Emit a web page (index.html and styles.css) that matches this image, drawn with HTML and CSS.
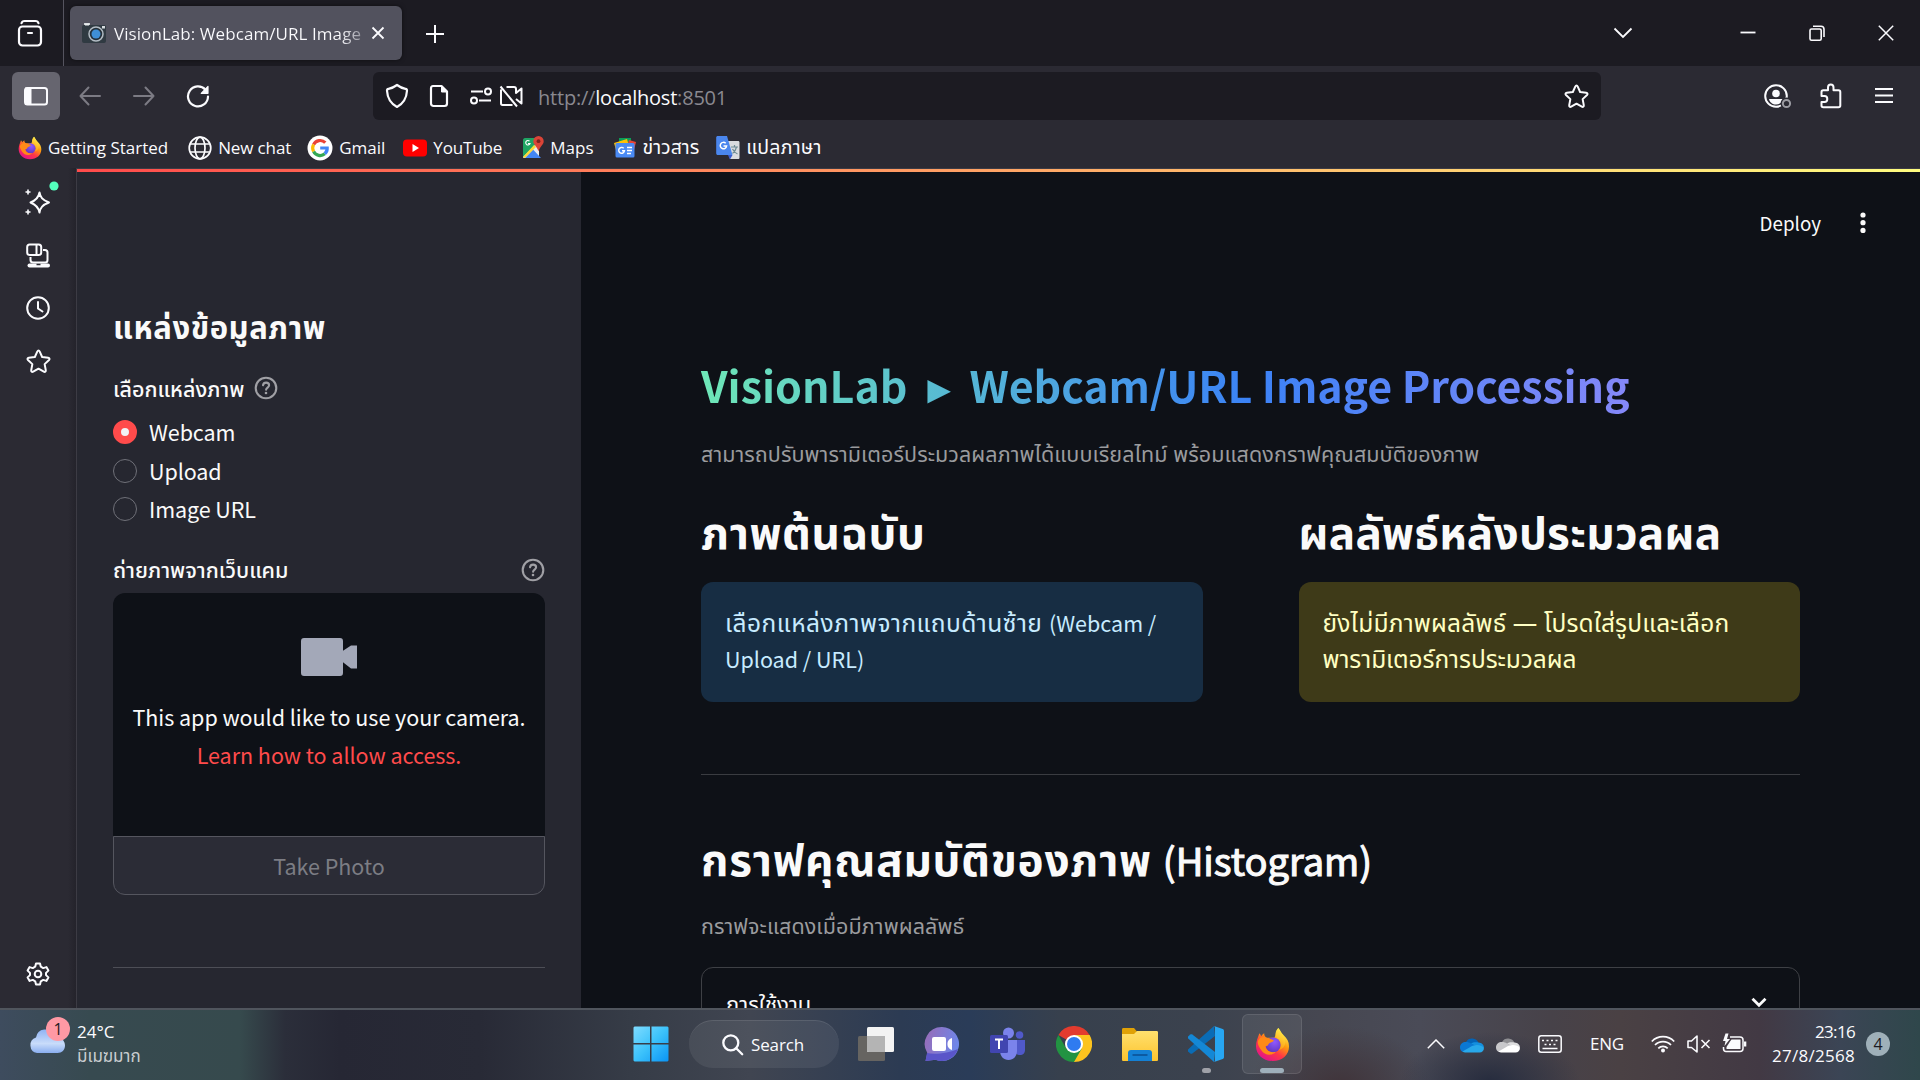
FILE: index.html
```html
<!DOCTYPE html>
<html lang="th">
<head>
<meta charset="utf-8">
<title>VisionLab: Webcam/URL Image Processing</title>
<link rel="stylesheet" href="styles.css">
</head>
<body>
<svg class="defs" aria-hidden="true">
  <defs>
    <linearGradient id="ff-body" x1="0.8" y1="0.1" x2="0.25" y2="0.95"><stop offset="0" stop-color="#fff44f"/><stop offset=".35" stop-color="#ff980e"/><stop offset=".65" stop-color="#ff3647"/><stop offset="1" stop-color="#e31587"/></linearGradient>
    <radialGradient id="ff-globe" cx=".6" cy=".3" r=".8"><stop offset="0" stop-color="#9059ff"/><stop offset="1" stop-color="#5b33b8"/></radialGradient>
    <linearGradient id="ff-tail" x1=".7" y1="0" x2=".4" y2="1"><stop offset="0" stop-color="#fff44f"/><stop offset="1" stop-color="#ff980e"/></linearGradient>
    <linearGradient id="win" x1="0" y1="0" x2="1" y2="1"><stop offset="0" stop-color="#7fdcff"/><stop offset=".5" stop-color="#3cc2fb"/><stop offset="1" stop-color="#0a94f5"/></linearGradient>
    <linearGradient id="cloud" x1="0" y1="0" x2="0" y2="1"><stop offset="0" stop-color="#8fb3f3"/><stop offset=".6" stop-color="#c9dcfa"/><stop offset="1" stop-color="#8aaef0"/></linearGradient>
    <linearGradient id="chat" x1="0" y1="0" x2="1" y2="0.3"><stop offset="0" stop-color="#9a6bb5"/><stop offset="1" stop-color="#6f86e8"/></linearGradient>
    <linearGradient id="folder" x1="0" y1="0" x2="0" y2="1"><stop offset="0" stop-color="#ffe06e"/><stop offset="1" stop-color="#fdc42e"/></linearGradient>
    <symbol id="firefox" viewBox="0 0 36 36">
      <path d="M24 1c2 2 2.500 4.500 5.500 7.500C33 12 35 15 35 20c0 8.500-7 15-17 15S1 28 1 19.500C1 15 3 11 4.500 6.500c1 1 1.500 2 1.800 3C7 8.500 8.500 7.200 9.500 6.500c-.2 2 .8 3.500 2.500 4.500L20 11c1.500-3 1-6 4-10z" fill="url(#ff-body)"/>
      <path d="M24 1c-3.500 3-3.500 7.500-1 10.500 4 3 5 8 1.500 12 5-1 8-6 6-11.500C29.500 8.500 25.500 5.500 24 1z" fill="url(#ff-tail)"/>
      <circle cx="18.500" cy="18.500" r="7.800" fill="url(#ff-globe)"/>
      <path d="M2.800 15c1.500-4.500 5.500-5.500 9.200-4 2 1 4.500.8 7.500 3-1 1.800-4 1.800-5.500 3.500-.3 1.700-2 2-3.200 2.500 1.200 4.500 5.700 7 10.700 5.500-4 4.500-11.500 4-15-1.500-2-3-3.900-6-3.700-9z" fill="#ff8a16"/>
    </symbol>
    <symbol id="help" viewBox="0 0 24 24">
      <circle cx="12" cy="12" r="10.300" fill="none" stroke="currentColor" stroke-width="2.100"/>
      <path d="M9 9.200c.3-1.600 1.500-2.600 3.100-2.600 1.700 0 3 1.100 3 2.700 0 2.200-3 2.300-3 4.500" fill="none" stroke="currentColor" stroke-width="2.100" stroke-linecap="round"/>
      <circle cx="12" cy="17" r="1.300" fill="currentColor"/>
    </symbol>
    <symbol id="star" viewBox="0 0 24 24">
      <path d="M12 1.500c.6 0 .9.400 1.200 1l2.300 5.200 5.800.7c1.300.2 1.700 1.300.8 2.200l-4.200 3.900 1.100 5.900c.2 1.300-.8 2-1.900 1.300L12 18.900l-5.100 2.800c-1.100.7-2.100 0-1.900-1.300l1.100-5.900-4.200-3.900c-.9-.9-.5-2 .8-2.200l5.800-.7 2.300-5.200c.3-.6.600-1 1.200-1z" fill="none" stroke="currentColor" stroke-width="1.900" stroke-linejoin="round"/>
    </symbol>
  </defs>
</svg>

<header class="tabbar">
  <div class="view-button">
    <svg width="26" height="30" viewBox="0 0 26 30" fill="none" stroke="currentColor" stroke-width="2.200" stroke-linecap="round"><path d="M4.500 4.200C5 2.500 6 2 7.500 2h11c1.500 0 2.500.5 3 2.200"/><rect x="2" y="7.500" width="22" height="19" rx="3.500"/><path d="M11 14h4"/></svg>
  </div>
  <div class="tab">
    <svg width="24" height="22" viewBox="0 0 24 22"><path d="M2 1h6v3H2z" fill="#cfd3d6"/><rect x="0" y="3" width="24" height="18" rx="2" fill="#303a42"/><rect x="3" y="1.500" width="4" height="2" fill="#e8ecee"/><rect x="20" y="4" width="3" height="2.500" fill="#d6dbde"/><circle cx="14" cy="12" r="7" fill="#25303a" stroke="#b3bcc4" stroke-width="1.500"/><circle cx="14" cy="12" r="4.500" fill="#3f8fd6"/></svg>
    <span class="tab-title">VisionLab: Webcam/URL Image</span>
    <svg width="14" height="14" viewBox="0 0 14 14" fill="none" stroke="currentColor" stroke-width="1.800"><path d="M1.500 1.500l11 11M12.500 1.500l-11 11"/></svg>
  </div>
  <svg class="new-tab" width="20" height="20" viewBox="0 0 20 20" fill="none" stroke="currentColor" stroke-width="2"><path d="M10 1v18M1 10h18"/></svg>
  <div class="window-controls">
    <svg width="20" height="12" viewBox="0 0 20 12" fill="none" stroke="currentColor" stroke-width="1.800"><path d="M1.500 1.500l8.500 8.500 8.500-8.500"/></svg>
    <svg width="16" height="16" viewBox="0 0 16 16" stroke="currentColor" stroke-width="1.800"><path d="M.5 7.500h15"/></svg>
    <svg width="16" height="16" viewBox="0 0 16 16" fill="none" stroke="currentColor" stroke-width="1.600"><rect x="1" y="4" width="11.200" height="11.200" rx="1.500"/><path d="M4 1.200h8c2 0 3 1 3 3V12"/></svg>
    <svg width="16" height="16" viewBox="0 0 16 16" stroke="currentColor" stroke-width="1.500"><path d="M.8.800l14.400 14.400M15.200.800L.8 15.200"/></svg>
  </div>
</header>

<nav class="navbar">
  <div class="sidebar-toggle"><svg width="24" height="20" viewBox="0 0 24 20" fill="none" stroke="currentColor" stroke-width="2"><rect x="1" y="2" width="22" height="16.500" rx="2.500"/><path d="M2 2.500h4.500v15.500H2z" fill="currentColor"/></svg></div>
  <svg class="dim back" width="22" height="20" viewBox="0 0 22 20" fill="none" stroke="currentColor" stroke-width="2" stroke-linecap="round" stroke-linejoin="round"><path d="M21 10H1.500M9.500 1.500L1.500 10l8 8.500"/></svg>
  <svg class="dim forward" width="22" height="20" viewBox="0 0 22 20" fill="none" stroke="currentColor" stroke-width="2" stroke-linecap="round" stroke-linejoin="round"><path d="M1 10h19.500M12.500 1.500l8 8.500-8 8.500"/></svg>
  <svg class="reload" width="24" height="24" viewBox="0 0 24 24" fill="none" stroke="currentColor" stroke-width="2.200" stroke-linecap="round"><path d="M19.500 5.800A10 10 0 1 0 22 12.500"/><path d="M22 2.500v6.800h-6.800z" fill="currentColor" stroke-width="1.200" stroke-linejoin="round"/></svg>
  <div class="urlbar">
    <svg width="24" height="26" viewBox="0 0 24 26" fill="none" stroke="currentColor" stroke-width="2.200" stroke-linejoin="round"><path d="M12 2c3 2.200 6 3.500 8.500 3.800 1.200.2 1.600.8 1.500 2-.4 7-3.500 12.700-10 16.200C5.500 20.500 2.400 14.800 2 7.800c-.1-1.200.3-1.800 1.500-2C6 5.500 9 4.200 12 2z"/></svg>
    <svg class="doc" width="20" height="24" viewBox="0 0 20 24" fill="none" stroke="currentColor" stroke-width="2.200" stroke-linejoin="round"><path d="M4 2h8.500L18 7.500V19.500c0 1.500-1 2.500-2.500 2.500h-11C3 22 2 21 2 19.500V4.500C2 3 2.800 2 4 2z"/><path d="M12.500 2v6H18z" fill="currentColor" stroke-width="1"/></svg>
    <svg class="perm" width="22" height="18" viewBox="0 0 22 18" fill="none" stroke="currentColor" stroke-width="2"><path d="M1 4.500h12M21 13.500H9"/><circle cx="18" cy="4.500" r="3"/><circle cx="4" cy="13.500" r="3"/></svg>
    <svg class="cam" width="24" height="24" viewBox="0 0 24 24" fill="none" stroke="currentColor" stroke-width="2" stroke-linejoin="round"><path d="M7.500 3H15c1.200 0 2 .8 2 2v4l5.500-4.500v15L17 15M13.500 21H3.500C2.500 21 2 20.300 2 19.300V5.500M1.500 2.500l16.500 20"/></svg>
    <span class="url"><span class="faint">http://</span>localhost<span class="faint">:8501</span></span>
    <svg class="bookmark-star" width="25" height="25"><use href="#star"/></svg>
  </div>
  <svg class="account" width="29" height="27" viewBox="0 0 29 27" fill="none" stroke="currentColor" stroke-width="2"><circle cx="13" cy="13" r="10.800"/><circle cx="13" cy="10.500" r="3.800" fill="currentColor" stroke="none"/><path d="M6 16h14c-.8 3.500-3.500 5.500-7 5.500S6.800 19.500 6 16z" fill="currentColor" stroke="none"/><circle cx="23.500" cy="20.500" r="6" fill="#2b2a33" stroke="none"/><circle cx="23.500" cy="20.500" r="3.600" stroke="#9b9ba2"/></svg>
  <svg class="extension" width="22" height="26" viewBox="0 0 22 26" fill="none" stroke="currentColor" stroke-width="2" stroke-linejoin="round"><path d="M1.500 13V9c0-1.200.6-1.800 1.800-1.800H8V4.500C8 2.500 9 1.500 10.800 1.500s2.700 1 2.700 3v2.700h5c1.200 0 1.800.6 1.800 1.800v13.500c0 1.200-.6 1.800-1.800 1.800H3.300c-1.200 0-1.800-.6-1.800-1.800V19h3c1.800 0 2.800-1.200 2.800-3s-1-3-2.800-3z"/></svg>
  <svg class="menu" width="20" height="18" viewBox="0 0 20 18" stroke="currentColor" stroke-width="2"><path d="M1 2h18M1 8.500h18M1 15h18"/></svg>
</nav>

<div class="bookmarks">
  <div class="bm b1"><svg width="24" height="26"><use href="#firefox"/></svg><span>Getting Started</span></div>
  <div class="bm b2"><svg width="24" height="24" viewBox="0 0 24 24" fill="none" stroke="currentColor" stroke-width="1.700"><circle cx="12" cy="12" r="10.800"/><ellipse cx="12" cy="12" rx="5" ry="10.800"/><path d="M2 8h20M2 16h20"/></svg><span>New chat</span></div>
  <div class="bm b3"><svg width="26" height="26" viewBox="0 0 26 26" fill="none" stroke-width="3.200"><circle cx="13" cy="13" r="12.500" fill="#fff"/><path d="M18.300 7.700A7.300 7.300 0 0 0 6.600 9.500" stroke="#ea4335"/><path d="M6.600 9.500a7.300 7.300 0 0 0 0 7" stroke="#fbbc05"/><path d="M6.600 16.500a7.300 7.300 0 0 0 11.200 2.300" stroke="#34a853"/><path d="M17.800 18.800A7.300 7.300 0 0 0 20.200 13H13.200" stroke="#4285f4"/></svg><span>Gmail</span></div>
  <div class="bm b4"><svg width="24" height="18" viewBox="0 0 24 18"><rect y=".5" width="24" height="17" rx="4" fill="#f00"/><path d="M9.500 5l6.500 4-6.500 4z" fill="#fff"/></svg><span>YouTube</span></div>
  <div class="bm b5"><svg width="22" height="24" viewBox="0 0 22 24"><path d="M1 4c0-1 .7-2 2-2h14v20H3c-1.300 0-2-1-2-2z" fill="#1fa463"/><path d="M1 21L17 5v17H3c-1.300 0-2-.4-2-1z" fill="#e8eaed"/><path d="M3 22l8-8.500 8 8.500z" fill="#4285f4"/><path d="M1 21L12 9l2 2L3 22z" fill="#fdd835"/><path d="M16.500 0a5.200 5.200 0 0 1 5.200 5.200c0 3.300-3.500 5-5.200 10-1.700-5-5.200-6.700-5.200-10A5.200 5.200 0 0 1 16.500 0z" fill="#db4437"/><circle cx="16.500" cy="5.200" r="1.900" fill="#7b231e"/><path d="M7.500 5.200A2.200 2.200 0 1 0 8 7.500H6" fill="none" stroke="#fff" stroke-width="1.100"/></svg><span>Maps</span></div>
  <div class="bm b6"><svg width="22" height="20" viewBox="0 0 22 20"><path d="M5 0h12v8H5z" fill="#0c9d58"/><path d="M0 5l13-4 2 7-13 4z" fill="#ffc107"/><path d="M22 4l-7-2-2 7 7 3z" fill="#ea4335"/><rect x="1.500" y="5" width="19" height="14.500" rx="1.500" fill="#4a8af4"/><path d="M13 9.500h5M13 12.500h5M13 15.500h4" stroke="#fff" stroke-width="1.300"/><path d="M9.700 10.300a2.900 2.900 0 1 0 .8 2.400H8" fill="none" stroke="#fff" stroke-width="1.400"/></svg><span class="th-ui">ข่าวสาร</span></div>
  <div class="bm b7"><svg width="24" height="26" viewBox="0 0 24 24"><path d="M9 5h13c1 0 1.500.5 1.500 1.500v15c0 1-.5 1.500-1.500 1.500h-8z" fill="#dadce0"/><path d="M2 0h9l5.500 19H2C.8 19 .2 18.400.2 17.200V1.800C.2.600.8 0 2 0z" fill="#4a86ee"/><path d="M12 19h4.500L14 23.500z" fill="#3a5bd0"/><path d="M15 11h7M18.500 9v2M20.500 11c-.8 3.500-2.500 5.500-4 6.500M16.500 13c1 2 3 4 5 5" fill="none" stroke="#6f8c96" stroke-width="1.200"/><path d="M9.700 7.300a3.200 3.200 0 1 0 .9 2.700H7.500" fill="none" stroke="#fff" stroke-width="1.500"/></svg><span class="th-ui">แปลภาษา</span></div>
</div>

<div class="browser-body">
  <aside class="rail">
    <svg class="r1" width="36" height="36" viewBox="0 0 36 36" fill="none" stroke="currentColor" stroke-width="2" stroke-linejoin="round"><path d="M15.500 11.500c.8 5 3 7.500 9.500 10-6.500 2.500-8.700 5-9.500 10-.8-5-3-7.500-9-10 6-2.500 8.200-5 9-10z"/><path d="M4 8.500v5M1.500 11h5M4 28.500v5M1.500 31h5" stroke-width="1.600"/><circle cx="30" cy="5" r="4.600" fill="#54ffbd" stroke="none"/></svg>
    <svg class="r2" width="24" height="25" viewBox="0 0 24 25" fill="none" stroke="currentColor" stroke-width="2"><rect x="1.200" y="1.500" width="14" height="10.500" rx="2.500"/><path d="M10.500 2v10M17 7h2c1.500 0 2.500.8 2.500 2.500V17c0 1.500-.8 2.500-2.500 2.500H7.500C6 19.500 4.500 18.500 4.500 17v-3"/><path d="M3.500 22.500h18.500" stroke-width="4" stroke-linecap="round"/><path d="M10.500 21.500h4" stroke="#2b2a33" stroke-width="1.500"/></svg>
    <svg class="r3" width="24" height="24" viewBox="0 0 24 24" fill="none" stroke="currentColor" stroke-width="2" stroke-linecap="round"><circle cx="12" cy="12" r="10.800"/><path d="M12 6v6.500l4.500 3"/></svg>
    <svg class="r4" width="25" height="25"><use href="#star"/></svg>
    <svg class="r5" width="24" height="24" viewBox="0 0 24 24" fill="none" stroke="currentColor" stroke-width="2" stroke-linejoin="round"><path d="M10 1.500h4l.8 3.200 2.400 1.400 3.200-1 2 3.500-2.400 2.300v2.200l2.400 2.300-2 3.500-3.200-1-2.400 1.400-.8 3.200h-4l-.8-3.200-2.400-1.400-3.200 1-2-3.500L4 13.100v-2.200L1.600 8.600l2-3.500 3.200 1 2.400-1.400z"/><circle cx="12" cy="12" r="3.300"/></svg>
  </aside>

  <div class="page">
    <div class="decoration"></div>
    <section class="side">
      <h2 class="side-title">แหล่งข้อมูลภาพ</h2>
      <div class="label source-label"><span>เลือกแหล่งภาพ</span><svg width="24" height="24"><use href="#help"/></svg></div>
      <div class="radio"><i class="dot on"></i><span>Webcam</span></div>
      <div class="radio"><i class="dot"></i><span>Upload</span></div>
      <div class="radio"><i class="dot"></i><span>Image URL</span></div>
      <div class="label cam-label"><span>ถ่ายภาพจากเว็บแคม</span><svg width="24" height="24"><use href="#help"/></svg></div>
      <div class="camera">
        <svg width="56" height="38" viewBox="0 0 56 36" preserveAspectRatio="none" fill="#a3a8b8"><path d="M3 0h36c2 0 3 1 3 3v9l8-5h6v22h-6l-8-6v10c0 2-1 3-3 3H3c-2 0-3-1-3-3V3c0-2 1-3 3-3z"/></svg>
        <p>This app would like to use your camera.</p>
        <p class="learn">Learn how to allow access.</p>
      </div>
      <div class="take-photo">Take Photo</div>
      <hr class="side-rule">
    </section>
    <main class="main">
      <div class="toolbar"><span>Deploy</span><svg width="6" height="22" viewBox="0 0 6 22" fill="currentColor"><circle cx="3" cy="3" r="2.600"/><circle cx="3" cy="10.700" r="2.600"/><circle cx="3" cy="18.400" r="2.600"/></svg></div>
      <h1 class="title"><span>VisionLab</span><span class="arrow">▸</span><span class="title-rest">Webcam/URL Image Processing</span></h1>
      <p class="caption c1">สามารถปรับพารามิเตอร์ประมวลผลภาพได้แบบเรียลไทม์ พร้อมแสดงกราฟคุณสมบัติของภาพ</p>
      <div class="columns">
        <div class="col">
          <h2 class="col-original">ภาพต้นฉบับ</h2>
          <div class="alert info"><span class="info-text">เลือกแหล่งภาพจากแถบด้านซ้าย</span> <span class="latin">(Webcam /</span><br><span class="latin">Upload / URL)</span></div>
        </div>
        <div class="col">
          <h2 class="col-result">ผลลัพธ์หลังประมวลผล</h2>
          <div class="alert warn">ยังไม่มีภาพผลลัพธ์ — โปรดใส่รูปและเลือก<br><span class="warn-rest">พารามิเตอร์การประมวลผล</span></div>
        </div>
      </div>
      <hr class="rule">
      <h2 class="hist"><span>กราฟคุณสมบัติของภาพ</span><span class="latin">(Histogram)</span></h2>
      <p class="caption c2">กราฟจะแสดงเมื่อมีภาพผลลัพธ์</p>
      <div class="expander"><span>การใช้งาน</span><svg width="16" height="11" viewBox="0 0 16 11" fill="none" stroke="currentColor" stroke-width="2.800"><path d="M1.500 1.800L8 8.300l6.500-6.500"/></svg></div>
    </main>
  </div>
</div>

<footer class="taskbar">
  <div class="weather">
    <div class="weather-icon">
      <svg width="42" height="40" viewBox="0 0 42 40"><path d="M9 36a8 8 0 0 1-1-15.500A9.500 9.500 0 0 1 26 18a9 9 0 0 1 4 3c4 0 7 3 7 7.500S34 36 29.500 36z" fill="url(#cloud)"/></svg>
      <span class="weather-count">1</span>
    </div>
    <div class="weather-text">24°C<br><span class="th-ui soft">มีเมฆมาก</span></div>
  </div>
  <div class="apps">
    <div class="app"><svg width="36" height="36" viewBox="0 0 36 36" fill="url(#win)"><path d="M1.500.500H17v16.500H.5V1.500zM18.500.500H34.500l1 1V17h-17zM.5 18.500H17V35.500H1.500l-1-1zM18.500 18.500h17v16l-1 1h-16z"/></svg></div>
    <div class="search"><svg width="22" height="22" viewBox="0 0 22 22" fill="none" stroke="currentColor" stroke-width="2.300" stroke-linecap="round"><circle cx="8.800" cy="8.800" r="7.500"/><path d="M14.200 14.200l6 6"/></svg><span>Search</span></div>
    <div class="app"><svg width="36" height="36" viewBox="0 0 36 36"><rect x="0" y="10" width="27" height="25" rx="1.500" fill="#666461"/><rect x="9" y="1" width="27" height="25" rx="1.500" fill="#f3f3f3"/><path d="M9 10h18v16H10.500L9 24.500z" fill="#b4b4b4"/></svg></div>
    <div class="app"><svg width="36" height="36" viewBox="0 0 36 36"><path d="M18 1a17 17 0 1 1-6.500 32.700L1.500 35l1.800-8A17 17 0 0 1 18 1z" fill="url(#chat)"/><path d="M3 27c8 2 22 0 31-4a17 17 0 0 1-22.500 10.700L1.500 35z" fill="#5a55c9"/><rect x="8" y="11" width="14" height="14" rx="2" fill="#fff"/><path d="M23.500 17c0-2 2-4.500 4.500-5v12c-2.500-.5-4.500-3-4.500-5z" fill="#fff"/></svg></div>
    <div class="app"><svg width="36" height="36" viewBox="0 0 36 36"><circle cx="18.500" cy="7" r="5.500" fill="#7b83eb"/><circle cx="29.500" cy="9" r="3.800" fill="#5059c9"/><path d="M24 14h11v10c0 3-2 5-5 5s-6-2-6-5z" fill="#5059c9"/><path d="M10 14h17v11c0 5-3.500 9-8.500 9S10 30 10 25z" fill="#7b83eb"/><rect x="0" y="9" width="18" height="18" rx="1.500" fill="#4145b0"/><path d="M5 13.500h8M9 13.500v9.500" stroke="#fff" stroke-width="2"/></svg></div>
    <div class="app"><svg width="36" height="36" viewBox="0 0 36 36"><path d="M18 18L2.400 9a18 18 0 0 1 31.200 0z" fill="#e33b2e"/><path d="M18 18V9h15.600A18 18 0 0 1 18 36z" fill="#fcc31e"/><path d="M2.400 9l7.800 13.500L18 27l7.800-4.500L18 36A18 18 0 0 1 2.400 9z" fill="#229342"/><circle cx="18" cy="18" r="9" fill="#fff"/><circle cx="18" cy="18" r="7" fill="#2f7bf0"/></svg></div>
    <div class="app"><svg width="36" height="36" viewBox="0 0 36 36"><path d="M0 3.500C0 2.500.5 2 1.500 2H12l3 3.500-2 3H0z" fill="#e0a106"/><path d="M0 8h12l3-3h19.500c1 0 1.500.5 1.500 1.500V33.500c0 1-.5 1.500-1.500 1.500h-33C.5 35 0 34.500 0 33.500z" fill="url(#folder)"/><path d="M6 35V27c0-1.800 1-3 3-3h18c2 0 3 1.200 3 3v8z" fill="#1480d4"/><path d="M10.500 29h15" stroke="#0b5196" stroke-width="1.600"/></svg></div>
    <div class="app under-dot"><svg width="36" height="36" viewBox="0 0 36 36"><path d="M26 0L7 17 0 23.500c-.5 1-.3 1.800.3 2.300l2 1.600c.7.500 1.300.4 2 0L27 10z" fill="#0a6cb5"/><path d="M.3 10.200l2-1.600c.7-.5 1.300-.4 2 0L27 26l-1 10L.2 12.500c-.5-.7-.5-1.600.1-2.300z" fill="#1488d6"/><path d="M26 0l8.700 3c.8.400 1.300 1 1.300 2v26c0 1-.5 1.600-1.300 2L26 36c1-.7 1-1.500 1-2.500v-31C27 1.500 27 .7 26 0z" fill="#27a6f2"/></svg></div>
    <div class="app active"><svg width="35" height="35"><use href="#firefox"/></svg></div>
  </div>
  <div class="tray">
    <svg width="18" height="10" viewBox="0 0 18 10" fill="none" stroke="currentColor" stroke-width="1.500"><path d="M.8 9.200L9 1l8.200 8.200"/></svg>
    <svg class="od" width="24" height="17" viewBox="0 0 24 17"><path d="M6 6a7 7 0 0 1 12.500 1L13 12z" fill="#0364b8"/><path d="M0 11.500C0 8 2.500 6 6 6c2 0 3.500.5 5 1.500l5 3L3 16c-2-.8-3-2.500-3-4.500z" fill="#0a78d4"/><path d="M11 7.500c2-1.200 4-1.500 7.500-1 3.500.2 5.500 2.500 5.500 5.200l-6-.7z" fill="#1490df"/><path d="M2.500 15.500L12 10c5-2 9-1 12 1.700 0 3-2 4.800-4.500 4.800H6c-1.500 0-2.500-.3-3.500-1z" fill="#28a8ea"/></svg>
    <svg class="od2" width="24" height="17" viewBox="0 0 24 17"><path d="M6 6a7 7 0 0 1 12.500 1L13 12z" fill="#8e8e92"/><path d="M0 11.500C0 8 2.500 6 6 6c2 0 3.500.5 5 1.500l5 3L3 16c-2-.8-3-2.500-3-4.500z" fill="#c8c8cb"/><path d="M11 7.500c2-1.200 4-1.500 7.500-1 3.500.2 5.500 2.500 5.500 5.200l-6-.7z" fill="#dededf"/><path d="M2.500 15.500L12 10c5-2 9-1 12 1.700 0 3-2 4.800-4.500 4.800H6c-1.500 0-2.500-.3-3.500-1z" fill="#fff"/></svg>
    <svg class="kb" width="24" height="18" viewBox="0 0 24 18" fill="none" stroke="currentColor" stroke-width="1.500"><rect x=".8" y=".8" width="22.400" height="16.400" rx="2.500"/><path d="M4 5.500h2m2.500 0h2m2.500 0h2m2.500 0h2M6.500 9.500h2m2.500 0h2m2.500 0h2M4.500 13.500h15" stroke-width="1.600"/></svg>
    <span class="eng">ENG</span>
    <svg class="wifi" width="24" height="18" viewBox="0 0 24 18" fill="none" stroke="currentColor" stroke-width="1.700"><path d="M.8 6.500a15.500 15.500 0 0 1 22.400 0M4 10a11 11 0 0 1 16 0M7.300 13.300a6.500 6.500 0 0 1 9.400 0"/><circle cx="12" cy="15.500" r="2" fill="currentColor" stroke="none"/></svg>
    <svg class="mute" width="24" height="18" viewBox="0 0 24 18" fill="none" stroke="currentColor" stroke-width="1.600" stroke-linejoin="round"><path d="M1 6h3.500L10 1v16L4.500 12.500H1z"/><path d="M14.500 5l8 8M22.500 5l-8 8"/></svg>
    <svg class="battery" width="25" height="20" viewBox="0 0 25 20" fill="none" stroke="currentColor" stroke-width="1.500"><path d="M8 4h10c2 0 3 1 3 3v8.500c0 2-1 3-3 3H4c-1.500 0-2.500-1-2.500-3V14"/><path d="M9.500 6.500h9v9.500H4.500v-2L8 8.500z" fill="currentColor" stroke="none"/><path d="M22 8.500h2.300v5H22z" fill="currentColor" stroke="none"/><path d="M3.500.500L1 8h2.500L2.500 13 8 6H5L6.500.500z" fill="currentColor" stroke="none"/></svg>
    <div class="clock"><span class="time">23:16</span><br><span class="date">27/8/2568</span></div>
    <div class="notif">4</div>
  </div>
</footer>
</body>
</html>
```
FILE: styles.css
```css
* { box-sizing: border-box; }
:root {
  --ui: "Open Sans", "Noto Sans", sans-serif;
  --app: "Noto Sans CJK JP", "Noto Sans Thai", "Noto Sans", sans-serif;
  --thai: "Noto Sans Thai", "Noto Sans", "Noto Sans CJK JP", sans-serif;
}
body {
  margin: 0; width: 1920px; height: 1080px; overflow: hidden;
  display: flex; flex-direction: column;
  background: #2b2a33; color: #fbfbfe;
  font-family: var(--ui); font-size: 17px; line-height: 24px;
}
svg { display: block; flex: none; }
.defs { position: absolute; width: 0; height: 0; }
h1, h2, p { margin: 0; white-space: nowrap; }
span { white-space: nowrap; }
hr { margin: 0; border: 0; height: 1px; }
.th-ui { font-family: var(--thai); font-size: 19.500px; }

/* tab strip */
.tabbar { height: 66px; flex: none; display: flex; align-items: center; background: #1c1b22; }
.view-button { width: 64px; height: 66px; padding: 19px 0 0 17px; border-right: 1px solid #55545f; }
.tab { width: 332px; height: 54px; margin-left: 6px; padding: 0 17px 0 12px; display: flex; align-items: center; border-radius: 6px; background: #52525e; box-shadow: 0 0 4px rgba(0,0,0,.5); }
.tab-title { width: 257px; margin-left: 8px; padding-top: 2px; letter-spacing: .07px; background: linear-gradient(90deg, #fbfbfe 225px, #8b8b95 250px); -webkit-background-clip: text; background-clip: text; color: transparent; }
.new-tab { margin-left: 23px; margin-top: 2px; }
.window-controls { margin-left: auto; padding-right: 26px; display: flex; align-items: center; }
.window-controls svg + svg { margin-left: 53px; }
.window-controls svg:nth-child(2) { margin-left: 107px; }

/* navigation */
.navbar { height: 60px; flex: none; display: flex; align-items: center; padding-left: 12px; }
.sidebar-toggle { width: 48px; height: 48px; border-radius: 6px; background: #66656f; display: grid; place-items: center; }
.dim { color: #7c7b84; }
.back { margin-left: 19px; }
.forward { margin-left: 32px; }
.reload { margin-left: 31px; }
.urlbar { width: 1228px; height: 48px; margin-left: 163px; padding: 0 12px; display: flex; align-items: center; border-radius: 6px; background: #1c1b22; }
.doc { margin-left: 20px; }
.perm { margin-left: 21px; }
.cam { margin-left: 7px; }
.url { margin-left: 15px; padding-top: 3px; font-size: 20px; letter-spacing: -.21px; }
.faint { color: #8a8990; }
.bookmark-star { margin-left: auto; }
.account { margin-left: 162px; }
.extension { margin-left: 28px; }
.menu { margin-left: 32px; }

/* bookmarks */
.bookmarks { height: 42px; flex: none; display: flex; align-items: center; padding: 1px 0 0 18px; }
.bm { display: flex; align-items: center; gap: 6px; }
.bm span { padding-top: 1px; }
.b2 { margin-left: 20px; letter-spacing: -.13px; }
.b3 { margin-left: 16px; }
.b4 { margin-left: 18px; letter-spacing: -.13px; }
.b5 { margin-left: 20px; }
.b6 { margin-left: 20px; gap: 7px; }
.b7 { margin-left: 17px; letter-spacing: .2px; }

/* browser body */
.browser-body { height: 840px; flex: none; display: flex; }
.rail { width: 76px; flex: none; padding-left: 26px; display: flex; flex-direction: column; background: linear-gradient(90deg, #2b2a33 68px, #24232b); }
.r1 { margin-top: 13px; margin-left: -2px; }
.r2 { margin-top: 26px; }
.r3 { margin-top: 28px; }
.r4 { margin-top: 29px; }
.r5 { margin-top: auto; margin-bottom: 22px; }
.page { flex: 1; min-width: 0; display: grid; grid-template: 3px 1fr / 504px 1fr; border-left: 1px solid #3c3b44; border-top: 1px solid #3c3b44; color: #fafafa; font-family: var(--app); }
.decoration { grid-column: 1 / 3; background: linear-gradient(90deg, #ff4b4b, #fffd80); }
.side { background: #262730; padding: 0 36px; overflow: hidden; font-size: 21.500px; }
.main { background: #0e1117; padding: 0 120px; overflow: hidden; }
h2 { font-family: var(--thai); font-weight: 700; }

/* app sidebar */
.side-title { margin-top: 131px; height: 51px; font-size: 31px; line-height: 54px; letter-spacing: .57px; }
.label { display: flex; align-items: center; height: 32px; font-family: var(--thai); font-size: 21.500px; font-weight: 500; }
.label svg { color: #a0a0a5; margin-left: 10px; }
.label span { padding-top: 5px; }
.source-label { margin-top: 18px; margin-bottom: 9px; }
.radio { display: flex; align-items: center; gap: 12px; height: 38.500px; letter-spacing: -.08px; }
.dot { width: 24px; height: 24px; border-radius: 50%; border: 1.500px solid #6f7078; }
.dot.on { border: 8px solid #ff4b4b; background: #f2f2f5; }
.cam-label { margin-top: 25px; justify-content: space-between; }
.camera { height: 243px; margin-top: 7.500px; padding-top: 45px; display: flex; flex-direction: column; align-items: center; border-radius: 12px 12px 0 0; background: #0e1117; letter-spacing: -.03px; }
.camera p { line-height: 38px; }
.camera svg { margin-bottom: 22px; }
.camera .learn { color: #ff4b4b; }
.take-photo { height: 59px; display: grid; place-items: center; border: 1px solid #55565f; border-radius: 0 0 12px 12px; background: #2b2c36; color: #7c7d84; }
.side-rule { margin-top: 72px; background: #4d4e56; }

/* app main */
.toolbar { height: 102px; margin-right: -66px; display: flex; align-items: center; justify-content: flex-end; gap: 39px; font-size: 18.800px; }
.title { margin-top: 74px; height: 76px; line-height: 72px; font-size: 43px; font-weight: 700; background: linear-gradient(90deg, #6ee7b7, #3b82f6 50%, #a78bfa); -webkit-background-clip: text; background-clip: text; color: transparent; display: flex; }
.title-rest { letter-spacing: -.13px; }
.arrow { width: 62px; text-align: center; }
.caption { font-family: var(--thai); color: #9a9b9e; font-size: 21.500px; line-height: 32px; letter-spacing: .08px; }
.c1 { margin-top: 16px; }
.columns { display: flex; gap: 96px; margin-top: 32px; }
.col { flex: 1; }
.main h2 { font-size: 44px; line-height: 64px; }
.main .col-original { letter-spacing: .63px; }
.main .col-result { letter-spacing: .28px; }
.alert { height: 120px; margin-top: 14px; padding: 25px 24px 0; border-radius: 12px; font-family: var(--thai); font-size: 24.500px; line-height: 36px; letter-spacing: .19px; }
.latin { font-family: var(--app); }
.alert .latin { font-size: 21.500px; line-height: 1; letter-spacing: 0; }
.info-text { letter-spacing: .5px; }
.warn-rest { letter-spacing: -.06px; }
.info { background: #172d43; color: #c7ebff; }
.warn { background: #3e3a18; color: #ffffc2; }
.rule { margin-top: 72px; background: #3a3c41; }
.hist { margin-top: 53px; height: 64px; display: flex; align-items: baseline; gap: 11px; letter-spacing: .76px; }
.hist .latin { font-size: 38px; font-weight: 400; letter-spacing: 0; -webkit-text-stroke: 1.100px currentColor; }
.c2 { margin-top: 20px; }
.expander { height: 72px; margin-top: 23px; padding: 0 32px 0 24px; display: flex; align-items: center; justify-content: space-between; border: 1px solid #3e4045; border-radius: 12px; font-family: var(--thai); font-size: 22px; }
.expander span { padding-top: 5px; }
.expander svg { margin-top: -2px; }

/* taskbar */
.taskbar {
  height: 72px; flex: none; display: flex; align-items: center; border-top: 2px solid #50555d; padding-bottom: 2px;
  background:
    radial-gradient(ellipse 90px 50px at 1490px 72px, #262c3e, transparent),
    radial-gradient(ellipse 90px 60px at 1340px 76px, #40343a, transparent),
    linear-gradient(90deg, #3e4c5e 0, #374a50 90px, #364a4d 240px, #2b2e3a 285px, #262734 340px, #282a36 480px, #363c47 630px, #404551 750px, #2c3b53 900px, #2a3c58 970px, #37404d 1060px, #3b424e 1200px, #464751 1320px, #4a4b57 1420px, #474249 1550px, #4a4144 1620px, #423944 1760px, #3b4555 1840px, #2f474b 1920px);
}
.weather { width: 621px; padding-left: 28px; display: flex; align-items: center; }
.weather-icon { position: relative; margin-top: -14px; }
.weather-count { position: absolute; left: 18px; top: 0; width: 24px; height: 24px; border-radius: 50%; background: #ff99a4; color: #1c1b22; text-align: center; font-size: 16px; }
.weather-text { margin-left: 7px; }
.th-ui.soft { color: #c9cdd0; font-size: 17px; }
.apps { display: flex; align-items: center; gap: 6px; }
.app { width: 60px; height: 60px; display: grid; place-items: center; border-radius: 6px; position: relative; }
.active { background: rgba(255,255,255,.07); border: 1px solid rgba(255,255,255,.1); }
.active::after, .under-dot::after { content: ""; position: absolute; bottom: 0; width: 24px; height: 5px; border-radius: 3px; background: #9fb0bb; }
.under-dot::after { width: 9px; bottom: 1px; background: #9fa1a8; }
.search { width: 150px; height: 48px; margin: 0 1px 0 2px; padding-left: 33px; display: flex; align-items: center; gap: 7px; border-radius: 24px; border-top: 1px solid rgba(255,255,255,.1); background: rgba(255,255,255,.07); letter-spacing: -.14px; }
.tray { margin-left: auto; padding-right: 30px; display: flex; align-items: center; }
.od { margin-left: 15px; }
.od2 { margin-left: 12px; }
.kb { margin-left: 18px; }
.eng { margin-left: 28px; letter-spacing: -.2px; }
.wifi { margin-left: 27px; }
.mute { margin-left: 12px; }
.battery { margin-left: 11px; margin-top: -3px; }
.clock { width: 84px; margin-left: 24px; text-align: right; }
.time { letter-spacing: -.67px; }
.date { letter-spacing: .28px; }
.notif { width: 24px; height: 24px; margin-left: 11px; border-radius: 50%; background: #9fb0b9; color: #1c1b22; text-align: center; font-size: 16px; }
```
